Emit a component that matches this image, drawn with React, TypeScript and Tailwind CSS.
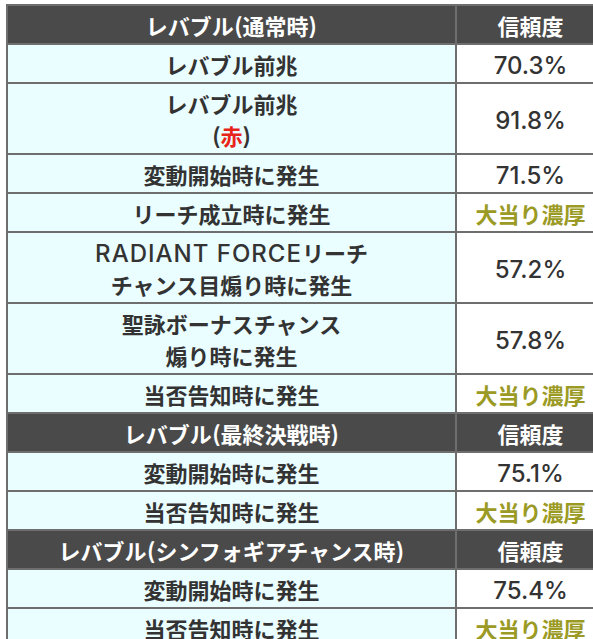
import React from "react";

type Row = { left: React.ReactNode[]; right: React.ReactNode; gold?: boolean; header?: boolean };

const GOLD = "大当り濃厚";

const L = ({ children, wide }: { children: React.ReactNode; wide?: boolean }) => (
  <span
    className={"text-[24px] leading-[20px] font-medium " + (wide ? "tracking-[1px]" : "")}
    style={{ fontFamily: 'Inter, "Liberation Sans", sans-serif' }}
  >
    {children}
  </span>
);

const rows: Row[] = [
  { left: [<>レバブル<L>(</L>通常時<L>)</L></>], right: "信頼度", header: true },
  { left: ["レバブル前兆"], right: <L>70.3%</L> },
  {
    left: [
      "レバブル前兆",
      <>
        <L>(</L>
        <span className="text-[#e8231a]">赤</span>
        <L>)</L>
      </>,
    ],
    right: <L>91.8%</L>,
  },
  { left: ["変動開始時に発生"], right: <L>71.5%</L> },
  { left: ["リーチ成立時に発生"], right: GOLD, gold: true },
  {
    left: [
      <>
        <L wide>RADIANT FORCE</L>リーチ
      </>,
      "チャンス目煽り時に発生",
    ],
    right: <L>57.2%</L>,
  },
  { left: ["聖詠ボーナスチャンス", "煽り時に発生"], right: <L>57.8%</L> },
  { left: ["当否告知時に発生"], right: GOLD, gold: true },
  { left: [<>レバブル<L>(</L>最終決戦時<L>)</L></>], right: "信頼度", header: true },
  { left: ["変動開始時に発生"], right: <L>75.1%</L> },
  { left: ["当否告知時に発生"], right: GOLD, gold: true },
  { left: [<>レバブル<L>(</L>シンフォギアチャンス時<L>)</L></>], right: "信頼度", header: true },
  { left: ["変動開始時に発生"], right: <L>75.4%</L> },
  { left: ["当否告知時に発生"], right: GOLD, gold: true },
];

const Line = ({ children }: { children: React.ReactNode }) => (
  <div className="h-[32px] leading-[32px] whitespace-nowrap overflow-visible">{children}</div>
);

export default function App() {
  return (
    <div className="w-[593px] h-[639px] overflow-hidden bg-white">
      <div
        className="pl-[6px] pt-[4px]"
        style={{ fontFamily: '"Noto Sans CJK JP", sans-serif' }}
      >
        <table className="w-[600px] border-collapse text-[22px] font-bold text-center">
          <tbody>
            {rows.map((r, i) => (
              <tr key={i} className={r.header ? "bg-[#4a4a4a] text-white" : "text-[#333333]"}>
                <td
                  className={
                    "w-[449px] border-2 border-[#6e6e6e] pt-[3px] pb-[2px] " +
                    (r.header ? "" : "bg-[#eafdff]")
                  }
                >
                  <div className="flex flex-col items-center">
                    {r.left.map((l, j) => (
                      <Line key={j}>{l}</Line>
                    ))}
                  </div>
                </td>
                <td
                  className={
                    "border-2 border-[#6e6e6e] pt-[3px] pb-[2px] align-middle " +
                    (r.header ? "" : "bg-white ") +
                    (r.gold ? "text-[#9b9a24]" : "")
                  }
                >
                  <div className="flex flex-col items-center">
                    <Line>{r.right}</Line>
                  </div>
                </td>
              </tr>
            ))}
          </tbody>
        </table>
      </div>
    </div>
  );
}
